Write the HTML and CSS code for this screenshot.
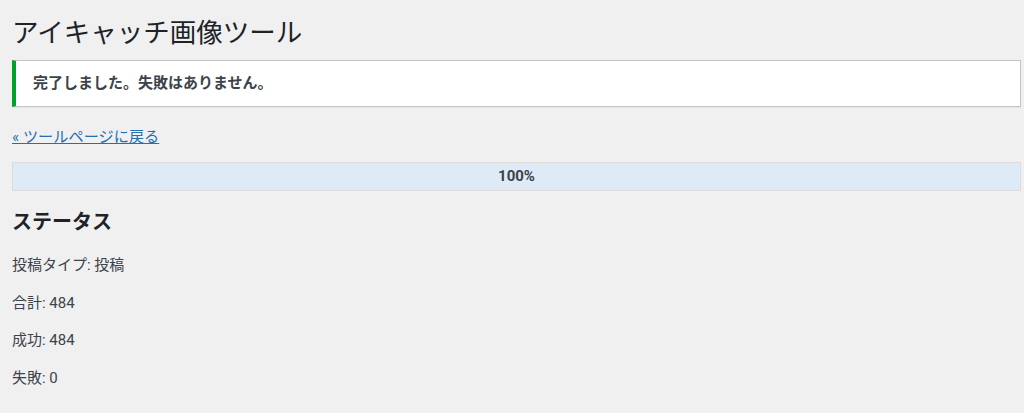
FILE: index.html
```html
<!DOCTYPE html>
<html lang="ja">
<head>
<meta charset="utf-8">
<title>アイキャッチ画像ツール</title>
<link rel="stylesheet" href="styles.css">
</head>
<body>
<div class="wrap">
  <h1 class="title">アイキャッチ画像ツール</h1>
  <div class="notice notice-success">
    <p class="notice-text">完了しました。失敗はありません。</p>
  </div>
  <p class="back"><a href="#" class="back-link">« ツールページに戻る</a></p>
  <div class="progress">100%</div>
  <h2 class="status-title">ステータス</h2>
  <p class="stat">投稿タイプ: 投稿</p>
  <p class="stat">合計: 484</p>
  <p class="stat">成功: 484</p>
  <p class="stat">失敗: 0</p>
</div>
</body>
</html>
```

FILE: styles.css
```css
html, body {
  margin: 0;
  padding: 0;
  background: #f0f0f1;
}
body {
  font-family: Roboto, "Noto Sans CJK JP", sans-serif;
  font-size: 15px;
  color: #3c434a;
}
.wrap {
  padding: 0 3px 0 12px;
}
.title {
  margin: 0;
  padding-top: 16px;
  font-size: 26.5px;
  line-height: 34px;
  font-weight: 400;
  color: #1d2327;
}
.notice {
  margin-top: 10px;
  background: #fff;
  border: 1px solid #c3c4c7;
  border-left: 4px solid #00a32a;
  box-shadow: 0 1px 1px rgba(0,0,0,0.04);
  padding: 11px 12px 11px 17px;
}
.notice-text {
  margin: 0;
  font-weight: 700;
  line-height: 23px;
  color: #3c434a;
}
.back {
  margin: 19px 0 0;
  line-height: 22px;
  font-size: 15.2px;
}
.back-link {
  color: #2271b1;
  text-decoration: underline;
}
.progress {
  margin-top: 14px;
  background: #deebf7;
  border: 1px solid #dcdcde;
  line-height: 27px;
  text-align: center;
  font-weight: 700;
  color: #3c434a;
}
.status-title {
  margin: 18px 0 0;
  font-size: 20px;
  line-height: 26px;
  font-weight: 700;
  color: #1d2327;
}
.stat {
  margin: 15px 0 0;
  line-height: 22.5px;
}
.status-title + .stat {
  margin-top: 19px;
}
```
